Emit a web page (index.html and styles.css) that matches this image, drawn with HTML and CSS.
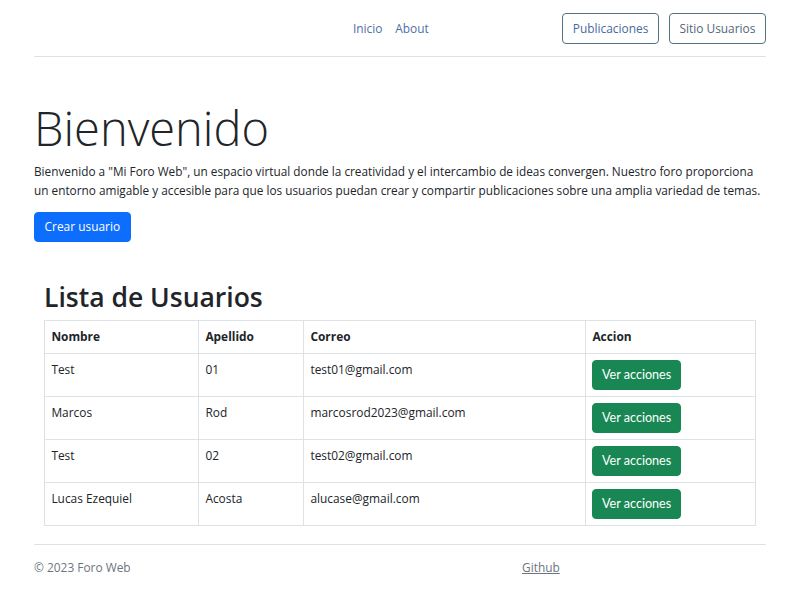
FILE: index.html
```html
<!DOCTYPE html>
<html lang="es">
<head>
<meta charset="utf-8">
<title>Mi Foro Web</title>
<link rel="stylesheet" href="styles.css">
</head>
<body>
<div class="container">
  <header class="site-header">
    <div class="brand"></div>
    <ul class="nav">
      <li><a href="#" class="nav-link">Inicio</a></li>
      <li><a href="#" class="nav-link">About</a></li>
    </ul>
    <div class="header-actions">
      <button class="btn btn-outline">Publicaciones</button>
      <button class="btn btn-outline btn-outline-dark">Sitio Usuarios</button>
    </div>
  </header>

  <section class="hero">
    <h1 class="display">Bienvenido</h1>
    <p class="lead-text">Bienvenido a "Mi Foro Web", un espacio virtual donde la creatividad y el intercambio de ideas convergen. Nuestro foro proporciona un entorno amigable y accesible para que los usuarios puedan crear y compartir publicaciones sobre una amplia variedad de temas.</p>
    <button class="btn btn-primary">Crear usuario</button>
  </section>

  <section class="users">
    <h2 class="users-title">Lista de Usuarios</h2>
    <table class="table">
      <colgroup>
        <col class="c-nombre"><col class="c-apellido"><col class="c-correo"><col class="c-accion">
      </colgroup>
      <thead>
        <tr><th>Nombre</th><th>Apellido</th><th>Correo</th><th>Accion</th></tr>
      </thead>
      <tbody>
        <tr><td>Test</td><td>01</td><td>test01@gmail.com</td><td><button class="btn btn-success">Ver acciones</button></td></tr>
        <tr><td>Marcos</td><td>Rod</td><td>marcosrod2023@gmail.com</td><td><button class="btn btn-success">Ver acciones</button></td></tr>
        <tr><td>Test</td><td>02</td><td>test02@gmail.com</td><td><button class="btn btn-success">Ver acciones</button></td></tr>
        <tr><td>Lucas Ezequiel</td><td>Acosta</td><td>alucase@gmail.com</td><td><button class="btn btn-success">Ver acciones</button></td></tr>
      </tbody>
    </table>
  </section>

  <footer class="site-footer">
    <p class="copy">© 2023 Foro Web</p>
    <div></div>
    <a href="#" class="footer-link">Github</a>
  </footer>
</div>
</body>
</html>
```
FILE: styles.css
```css
* { box-sizing: border-box; }
html, body { margin: 0; padding: 0; background: #fff; }
body {
  font-family: "Open Sans", "Noto Sans", sans-serif;
  font-size: 11.9px;
  line-height: 19.2px;
  color: #212529;
}
.container { width: 732px; margin: 0 auto; }

.site-header {
  display: flex;
  align-items: center;
  padding: 12.8px 0;
  border-bottom: 1px solid #dee2e6;
}
.brand { flex: 0 0 312.6px; }
.nav { display: flex; list-style: none; margin: 0; padding: 0; }
.nav-link { display: block; padding: 0 6.4px; color: #4f6ea6; text-decoration: none; }
.header-actions { margin-left: auto; display: flex; gap: 10px; }

.btn {
  font-family: inherit;
  font-size: 11.9px;
  line-height: 19.2px;
  padding: 4.8px 9.6px;
  border: 1px solid transparent;
  border-radius: 4px;
  background: transparent;
  cursor: pointer;
}
.btn-outline { border-color: #52737f; color: #4a699b; }
.btn-outline-dark { color: #556677; }
.btn-primary { background: #0d6efd; border-color: #0d6efd; color: #fff; }
.btn-success {
  background: #198754; border-color: #198754; color: #fff;
  font-family: "Lato", "Open Sans", sans-serif; font-size: 12.6px;
  padding: 4px 8.6px;
}

.hero { padding: 43px 0 0; }
.display {
  font-size: 47px;
  font-weight: 300;
  line-height: 57.6px;
  margin: 0 0 4px;
}
.lead-text { margin: 0 0 11.2px; font-size: 11.8px; }

.users { padding: 39px 10px 0; }
.users-title { font-size: 26.5px; font-weight: 600; line-height: 33.6px; margin: 0 0 5px; }
.table { width: 100%; border-collapse: collapse; }
.table th, .table td {
  border: 1px solid #dee2e6;
  padding: 6.4px;
  text-align: left;
  vertical-align: top;
}
.table th { font-weight: 700; }
.c-nombre { width: 154px; }
.c-apellido { width: 105px; }
.c-correo { width: 282px; }

.site-footer {
  display: grid;
  grid-template-columns: 1fr 1fr 1fr;
  align-items: center;
  margin-top: 18.5px;
  padding: 12.8px 0;
  border-top: 1px solid #dee2e6;
  color: #6c757d;
}
.copy { margin: 0; }
.footer-link { color: #6c757d; }
```
